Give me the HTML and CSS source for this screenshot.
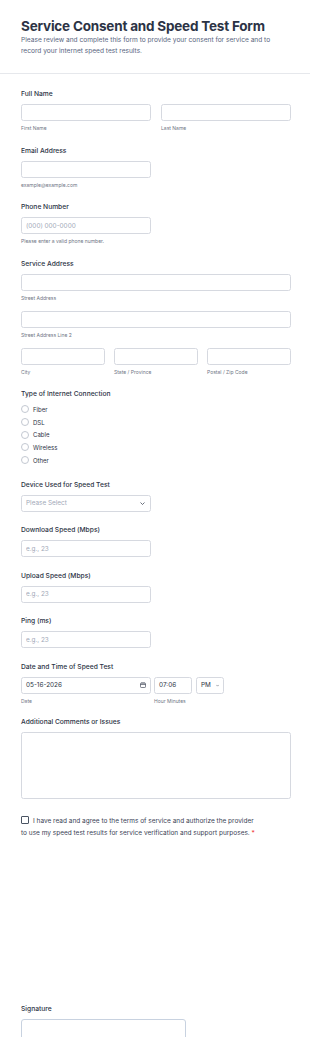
FILE: index.html
```html
<!DOCTYPE html>
<html lang="en">
<head>
<meta charset="utf-8">
<title>Service Consent and Speed Test Form</title>
<link rel="stylesheet" href="styles.css">
</head>
<body>
<div class="page">
  <header class="header">
    <h1 class="title">Service Consent and Speed Test Form</h1>
    <p class="subtitle">Please review and complete this form to provide your consent for service and to record your internet speed test results.</p>
  </header>
  <form class="form">
    <div class="field">
      <label class="label">Full Name</label>
      <div class="row two">
        <div class="col"><input class="input" type="text"><span class="sub">First Name</span></div>
        <div class="col"><input class="input" type="text"><span class="sub">Last Name</span></div>
      </div>
    </div>
    <div class="field">
      <label class="label">Email Address</label>
      <div class="half"><input class="input" type="text"><span class="sub">example@example.com</span></div>
    </div>
    <div class="field">
      <label class="label">Phone Number</label>
      <div class="half"><input class="input" type="text" placeholder="(000) 000-0000"><span class="sub">Please enter a valid phone number.</span></div>
    </div>
    <div class="field">
      <label class="label">Service Address</label>
      <div class="col"><input class="input" type="text"><span class="sub">Street Address</span></div>
      <div class="col gap"><input class="input" type="text"><span class="sub">Street Address Line 2</span></div>
      <div class="row three gap">
        <div class="col"><input class="input" type="text"><span class="sub">City</span></div>
        <div class="col"><input class="input" type="text"><span class="sub">State / Province</span></div>
        <div class="col"><input class="input" type="text"><span class="sub">Postal / Zip Code</span></div>
      </div>
    </div>
    <div class="field">
      <label class="label">Type of Internet Connection</label>
      <div class="radios">
        <div class="radio"><span class="circle"></span>Fiber</div>
        <div class="radio"><span class="circle"></span>DSL</div>
        <div class="radio"><span class="circle"></span>Cable</div>
        <div class="radio"><span class="circle"></span>Wireless</div>
        <div class="radio"><span class="circle"></span>Other</div>
      </div>
    </div>
    <div class="field">
      <label class="label">Device Used for Speed Test</label>
      <div class="half"><div class="input select"><span class="ph">Please Select</span><svg class="chev" viewBox="0 0 10 6" width="5" height="3"><path d="M1 1l4 4 4-4" fill="none" stroke="#2c3345" stroke-width="1.4"/></svg></div></div>
    </div>
    <div class="field">
      <label class="label">Download Speed (Mbps)</label>
      <div class="half"><input class="input" type="text" placeholder="e.g., 23"></div>
    </div>
    <div class="field">
      <label class="label">Upload Speed (Mbps)</label>
      <div class="half"><input class="input" type="text" placeholder="e.g., 23"></div>
    </div>
    <div class="field">
      <label class="label">Ping (ms)</label>
      <div class="half"><input class="input" type="text" placeholder="e.g., 23"></div>
    </div>
    <div class="field datefield">
      <label class="label">Date and Time of Speed Test</label>
      <div class="datetime">
        <div class="col date"><div class="input withicon"><span class="val">05-16-2026</span><svg class="cal" viewBox="0 0 12 12" width="6" height="6"><rect x="1" y="2" width="10" height="9" rx="1.5" fill="none" stroke="#2c3345" stroke-width="1.2"/><path d="M1 5h10M4 0.5v3M8 0.5v3" stroke="#2c3345" stroke-width="1.2"/></svg></div><span class="sub">Date</span></div>
        <div class="col time">
          <div class="timerow">
            <div class="input hm"><span class="val">07:06</span></div>
            <div class="input ampm"><span class="val">PM</span><svg class="chev" viewBox="0 0 10 6" width="5" height="3"><path d="M1 1l4 4 4-4" fill="none" stroke="#2c3345" stroke-width="1.4"/></svg></div>
          </div>
          <span class="sub">Hour Minutes</span>
        </div>
      </div>
    </div>
    <div class="field">
      <label class="label">Additional Comments or Issues</label>
      <textarea class="input area"></textarea>
    </div>
    <div class="field consent">
      <p class="consent-text"><span class="box"></span>I have read and agree to the terms of service and authorize the provider to use my speed test results for service verification and support purposes. <span class="req">*</span></p>
    </div>
    <div class="field signature">
      <label class="label">Signature</label>
      <div class="sigpad"></div>
    </div>
  </form>
</div>
</body>
</html>
```

FILE: styles.css
```css
* { box-sizing: border-box; }
html, body { margin: 0; padding: 0; background: #ffffff; }
body {
  font-family: Inter, "Noto Sans", "Liberation Sans", sans-serif;
  color: #2c3345;
}
.header {
  padding: 17px 21px 0;
  height: 74px;
  border-bottom: 1px solid #e6e8ec;
}
.title {
  margin: 0;
  font-size: 13.5px;
  line-height: 18px;
  font-weight: 700;
  color: #2c3345;
  letter-spacing: -0.2px;
}
.subtitle {
  margin: 0;
  font-size: 6.6px;
  line-height: 11px;
  color: #57647e;
}
.form { padding: 15px 19px 0 21px; }
.field { margin-bottom: 13.5px; display: flex; flex-direction: column; }
.datefield { margin-bottom: 12.5px; }
.label {
  display: block;
  font-size: 6.7px;
  line-height: 10px;
  font-weight: 500;
  color: #2c3345;
  margin-bottom: 5px;
}
.row { display: grid; }
.row.two { grid-template-columns: 1fr 1fr; column-gap: 10px; }
.row.three { grid-template-columns: 1fr 1fr 1fr; column-gap: 9px; }
.col { display: flex; flex-direction: column; }
.gap { margin-top: 9px; }
.half { width: 130px; display: flex; flex-direction: column; }
.input {
  display: block;
  width: 100%;
  height: 17px;
  border: 1px solid #d6d9e0;
  border-radius: 2.5px;
  background: #fff;
  font-family: inherit;
  font-size: 6.4px;
  color: #2c3345;
  padding: 0 4px;
  margin: 0;
  outline: none;
}
.input::placeholder { color: #a1a8b7; }
.sub {
  display: block;
  font-size: 5px;
  line-height: 8px;
  margin-top: 3px;
  color: #6f7685;
}
.radios { display: flex; flex-direction: column; margin-top: -1px; }
.radio {
  display: flex;
  align-items: center;
  height: 12.7px;
  font-size: 6px;
  color: #2c3345;
}
.circle {
  width: 8px;
  height: 8px;
  border: 1px solid #c3c8d1;
  border-radius: 50%;
  margin-right: 4px;
  flex: none;
}
.select {
  display: flex;
  align-items: center;
  justify-content: space-between;
  padding: 0 5px 0 4px;
}
.ph { color: #a1a8b7; font-size: 6.4px; }
.datetime { display: flex; }
.date { width: 130px; }
.withicon {
  display: flex;
  align-items: center;
  justify-content: space-between;
  padding: 0 4px;
}
.val { font-size: 6.4px; color: #2c3345; }
.time { margin-left: 3px; }
.timerow { display: flex; gap: 4px; }
.hm { width: 38px; display: flex; align-items: center; padding: 0 4px; }
.ampm { width: 28px; display: flex; align-items: center; gap: 5px; padding: 0 4px; }
.area { height: 67px; resize: none; }
.consent { margin-top: 16px; }
.consent-text {
  margin: 0;
  width: 239px;
  font-size: 6.5px;
  line-height: 12px;
  color: #3a4255;
}
.box {
  display: inline-block;
  width: 8px;
  height: 8px;
  border: 1px solid #4b5563;
  border-radius: 1px;
  vertical-align: -1px;
  margin-right: 4px;
}
.req { color: #f23a3c; }
.signature { margin-top: 165px; }
.sigpad {
  width: 165px;
  height: 40px;
  border: 1px solid #c8d2e0;
  border-radius: 3px;
}
```
